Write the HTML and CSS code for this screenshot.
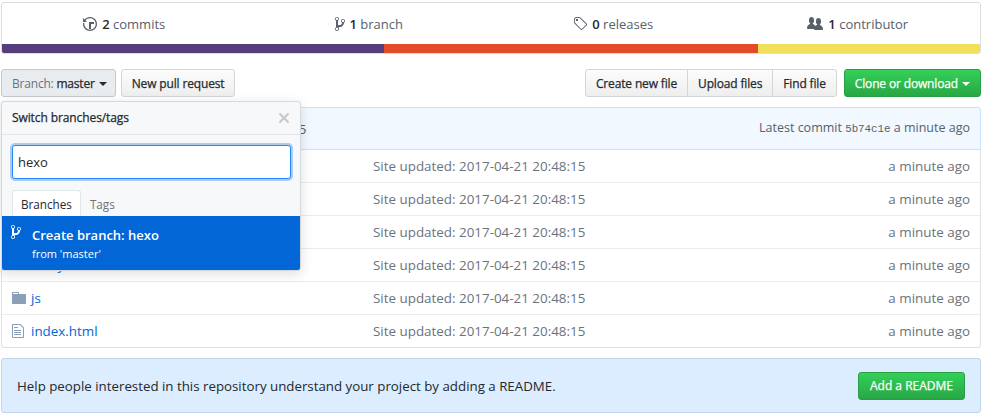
FILE: index.html
```html
<!DOCTYPE html>
<html lang="en">
<head>
    <meta charset="UTF-8">
    <meta name="viewport" content="width=device-width, initial-scale=1.0">
    <title>Repository</title>
    <link rel="stylesheet" href="styles.css">
</head>
<body>
    <svg class="sprites" width="0" height="0">
        <symbol id="i-history" viewBox="0 0 14 16"><path d="M8 13H6V6h5v2H8v5zM7 1C4.81 1 2.87 2.02 1.59 3.59L0 2v4h4L2.5 4.5C3.55 3.17 5.17 2.3 7 2.3c3.14 0 5.7 2.56 5.7 5.7s-2.56 5.7-5.7 5.7A5.71 5.71 0 0 1 1.3 8c0-.34.03-.67.09-1H.08C.03 7.33 0 7.66 0 8c0 3.86 3.14 7 7 7s7-3.14 7-7-3.14-7-7-7z"/></symbol>
        <symbol id="i-branch" viewBox="0 0 10 16"><path d="M10 5c0-1.11-.89-2-2-2a1.993 1.993 0 0 0-1 3.72v.3c-.02.52-.23.98-.63 1.38-.4.4-.86.61-1.38.63-.83.02-1.48.16-2 .45V4.72a1.993 1.993 0 0 0-1-3.72C.88 1 0 1.89 0 3a2 2 0 0 0 1 1.72v6.56c-.59.35-1 .99-1 1.72 0 1.11.89 2 2 2 1.11 0 2-.89 2-2 0-.53-.2-1-.53-1.36.09-.06.48-.41.59-.47.25-.11.56-.17.94-.17 1.05-.05 1.95-.45 2.75-1.25S8.95 7.77 9 6.73h-.02C9.59 6.37 10 5.73 10 5zM2 1.8c.66 0 1.2.55 1.2 1.2 0 .65-.55 1.2-1.2 1.2C1.35 4.2.8 3.65.8 3c0-.65.55-1.2 1.2-1.2zm0 12.41c-.66 0-1.2-.55-1.2-1.2 0-.65.55-1.2 1.2-1.2.65 0 1.2.55 1.2 1.2 0 .65-.55 1.2-1.2 1.2zm6-8c-.66 0-1.2-.55-1.2-1.2 0-.65.55-1.2 1.2-1.2.65 0 1.2.55 1.2 1.2 0 .65-.55 1.2-1.2 1.2z"/></symbol>
        <symbol id="i-tag" viewBox="0 0 14 16"><path d="M7.73 1.73C7.26 1.26 6.62 1 5.96 1H3.5C2.13 1 1 2.13 1 3.5v2.47c0 .66.27 1.3.73 1.77l6.06 6.06c.39.39 1.02.39 1.41 0l4.59-4.59a.996.996 0 0 0 0-1.41L7.73 1.73zM2.38 7.09c-.31-.3-.47-.7-.47-1.13V3.5c0-.88.72-1.59 1.59-1.59h2.47c.42 0 .83.16 1.13.47l6.14 6.13-4.73 4.73-6.13-6.15zM3.01 3h2v2H3V3h.01z"/></symbol>
        <symbol id="i-people" viewBox="0 0 16 16"><path d="M16 12.999c0 .439-.45 1-1 1H7.995c-.539 0-.994-.447-.995-.999H1c-.54 0-1-.561-1-1 0-2.634 3-4 3-4s.229-.409 0-1c-.841-.621-1.058-.59-1-3 .058-2.419 1.367-3 2.5-3s2.442.58 2.5 3c.058 2.41-.159 2.379-1 3-.229.59 0 1 0 1s1.549.711 2.42 2.088C9.196 9.369 10 8.999 10 8.999s.229-.409 0-1c-.841-.62-1.058-.59-1-3 .058-2.419 1.367-3 2.5-3s2.437.581 2.495 3c.059 2.41-.158 2.38-1 3-.229.59 0 1 0 1s3.005 1.366 3.005 4z"/></symbol>
        <symbol id="i-folder" viewBox="0 0 14 16"><path d="M13 4H7V3c0-.66-.31-1-1-1H1c-.55 0-1 .45-1 1v10c0 .55.45 1 1 1h12c.55 0 1-.45 1-1V5c0-.55-.45-1-1-1zM6 4H1V3h5v1z"/></symbol>
        <symbol id="i-file" viewBox="0 0 12 16"><path d="M6 5H2V4h4v1zM2 8h7V7H2v1zm0 2h7V9H2v1zm0 2h7v-1H2v1zm10-7.5V14c0 .55-.45 1-1 1H1c-.55 0-1-.45-1-1V2c0-.55.45-1 1-1h7.5L12 4.5zM11 5L8 2H1v12h10V5z"/></symbol>
        <symbol id="i-x" viewBox="0 0 12 16"><path d="M7.48 8l3.75 3.75-1.48 1.48L6 9.48l-3.75 3.75-1.48-1.48L4.52 8 .77 4.25l1.48-1.48L6 6.52l3.75-3.75 1.48 1.48L7.48 8z"/></symbol>
    </svg>

    <div class="container">
        <div class="overall">
            <ul class="numbers">
                <li><svg class="icon" width="14" height="16"><use href="#i-history"/></svg><span><b>2</b> commits</span></li>
                <li><svg class="icon" width="10" height="16"><use href="#i-branch"/></svg><span><b>1</b> branch</span></li>
                <li><svg class="icon" width="14" height="16"><use href="#i-tag"/></svg><span><b>0</b> releases</span></li>
                <li><svg class="icon" width="16" height="16"><use href="#i-people"/></svg><span><b>1</b> contributor</span></li>
            </ul>
            <div class="langs">
                <span class="lang-css"></span>
                <span class="lang-html"></span>
                <span class="lang-js"></span>
            </div>
        </div>

        <div class="actions">
            <div class="branch-wrap">
                <button class="btn btn-selected"><span class="muted">Branch:</span> master<i class="caret"></i></button>
                <div class="menu">
                    <div class="menu-head">
                        <span>Switch branches/tags</span>
                        <svg class="menu-close" width="12" height="16"><use href="#i-x"/></svg>
                    </div>
                    <div class="menu-filter"><input class="filter-input" type="text" value="hexo"></div>
                    <div class="menu-tabs">
                        <span class="tab tab-active">Branches</span>
                        <span class="tab">Tags</span>
                    </div>
                    <div class="menu-create">
                        <svg class="create-icon" width="10" height="16"><use href="#i-branch"/></svg>
                        <div>
                            <div class="create-title">Create branch: hexo</div>
                            <div class="create-from">from 'master'</div>
                        </div>
                    </div>
                </div>
            </div>
            <button class="btn">New pull request</button>
            <div class="spacer"></div>
            <div class="btn-group">
                <button class="btn">Create new file</button>
                <button class="btn">Upload files</button>
                <button class="btn">Find file</button>
            </div>
            <button class="btn btn-green">Clone or download<i class="caret"></i></button>
        </div>

        <div class="tease">
            <span class="tease-msg">Site updated: 2017-04-21 20:48:15</span>
            <span class="tease-meta">Latest commit <code>5b74c1e</code> a minute ago</span>
        </div>
        <div class="files">
            <div class="row"><span class="name"><svg class="file-icon" width="14" height="16"><use href="#i-folder"/></svg><a>2017</a></span><span class="msg">Site updated: 2017-04-21 20:48:15</span><span class="age">a minute ago</span></div>
            <div class="row"><span class="name"><svg class="file-icon" width="14" height="16"><use href="#i-folder"/></svg><a>archives</a></span><span class="msg">Site updated: 2017-04-21 20:48:15</span><span class="age">a minute ago</span></div>
            <div class="row"><span class="name"><svg class="file-icon" width="14" height="16"><use href="#i-folder"/></svg><a>css</a></span><span class="msg">Site updated: 2017-04-21 20:48:15</span><span class="age">a minute ago</span></div>
            <div class="row"><span class="name"><svg class="file-icon" width="14" height="16"><use href="#i-folder"/></svg><a>fancybox</a></span><span class="msg">Site updated: 2017-04-21 20:48:15</span><span class="age">a minute ago</span></div>
            <div class="row"><span class="name"><svg class="file-icon" width="14" height="16"><use href="#i-folder"/></svg><a>js</a></span><span class="msg">Site updated: 2017-04-21 20:48:15</span><span class="age">a minute ago</span></div>
            <div class="row"><span class="name"><svg class="file-icon file-icon-text" width="12" height="16"><use href="#i-file"/></svg><a>index.html</a></span><span class="msg">Site updated: 2017-04-21 20:48:15</span><span class="age">a minute ago</span></div>
        </div>

        <div class="readme">
            <span>Help people interested in this repository understand your project by adding a README.</span>
            <button class="btn btn-green btn-readme">Add a README</button>
        </div>
    </div>
</body>
</html>
```
FILE: styles.css
```css
* {
    box-sizing: border-box;
}
body {
    margin: 0;
    font-family: "Open Sans", sans-serif;
    font-size: 14px;
    line-height: 20px;
    color: #24292e;
    background: #fff;
    overflow: hidden;
}
.sprites {
    position: absolute;
}
.container {
    width: 980px;
    margin: 2px 0 0 1px;
}
.overall {
    border: 1px solid #ddd;
    border-radius: 3px;
    overflow: hidden;
}
.numbers {
    display: flex;
    margin: 0;
    padding: 0;
    list-style: none;
    height: 41px;
}
.numbers li {
    flex: 1;
    display: flex;
    align-items: center;
    justify-content: center;
    gap: 5px;
    color: #586069;
    font-size: 13px;
}
.numbers b {
    font-weight: 600;
    color: #24292e;
}
.icon {
    fill: #586069;
}
.langs {
    display: flex;
    height: 9px;
}
.lang-css {
    width: 382px;
    background: #563d7c;
}
.lang-html {
    width: 374px;
    background: #e34c26;
}
.lang-js {
    flex: 1;
    background: #f1e05a;
}

.actions {
    display: flex;
    align-items: flex-start;
    gap: 5px;
    margin-top: 15px;
}
.spacer {
    flex: 1;
}
.btn {
    height: 28px;
    padding: 0 10px;
    border: 1px solid #d5d5d5;
    border-radius: 3px;
    background: linear-gradient(#fcfcfc, #eee);
    font-family: inherit;
    font-size: 12px;
    letter-spacing: -0.15px;
    -webkit-text-stroke: 0.25px;
    color: #24292e;
    white-space: nowrap;
}
.btn-selected {
    padding-right: 8px;
    letter-spacing: -0.2px;
    background: #e9ecef;
    border-color: #c4c8cc;
}
.muted {
    -webkit-text-stroke: 0;
    color: #6a737d;
}
.caret {
    display: inline-block;
    margin-left: 4px;
    vertical-align: middle;
    border: 4px solid transparent;
    border-top-color: currentColor;
    border-bottom: 0;
}
.btn-group {
    display: flex;
    margin-right: 2px;
}
.btn-group .btn {
    border-radius: 0;
    margin-left: -1px;
}
.btn-group .btn:first-child {
    border-radius: 3px 0 0 3px;
}
.btn-group .btn:last-child {
    border-radius: 0 3px 3px 0;
}
.btn-green {
    color: #fff;
    background: linear-gradient(#34d058, #28a745);
    border-color: #279f43;
    letter-spacing: -0.15px;
}

.branch-wrap {
    position: relative;
}
.menu {
    position: absolute;
    top: 32px;
    left: 0;
    z-index: 10;
    width: 300px;
    height: 170px;
    border: 1px solid #d5d8dc;
    border-radius: 3px;
    background: #f6f8fa;
    box-shadow: 0 3px 12px rgba(27, 31, 35, 0.15);
    overflow: hidden;
}
.menu-head {
    display: flex;
    align-items: center;
    justify-content: space-between;
    height: 33px;
    padding: 0 10px;
    border-bottom: 1px solid #e1e4e8;
    font-size: 12px;
    letter-spacing: -0.1px;
    -webkit-text-stroke: 0.25px;
}
.menu-close {
    fill: #c5c8cc;
}
.menu-filter {
    padding: 10px 9px 0 10px;
}
.filter-input {
    display: block;
    width: 100%;
    height: 34px;
    padding: 0 8px 0 5px;
    border: 1px solid #2188ff;
    border-radius: 3px;
    box-shadow: 0 0 0 2px rgba(3, 102, 214, 0.3);
    outline: none;
    font-family: inherit;
    font-size: 13px;
    color: #24292e;
}
.menu-tabs {
    display: flex;
    height: 26px;
    margin-top: 11px;
    padding-left: 10px;
    font-size: 11.7px;
}
.tab {
    padding: 3px 8px;
    border: 1px solid transparent;
    border-bottom: 0;
    color: #6a737d;
}
.tab-active {
    background: #fff;
    border-color: #e1e4e8;
    border-radius: 3px 3px 0 0;
    color: #24292e;
}
.menu-create {
    display: flex;
    gap: 11px;
    height: 55px;
    margin: 0 -1px;
    padding: 8px 10px 0 10px;
    background: #0366d6;
    color: #fff;
}
.create-icon {
    fill: #fff;
}
.create-title {
    margin-top: 1px;
    font-size: 13px;
    font-weight: 600;
}
.create-from {
    font-size: 11px;
    line-height: 18px;
}

.tease {
    display: flex;
    align-items: center;
    justify-content: space-between;
    height: 43px;
    margin-top: 10px;
    padding: 0 10px 0 92px;
    border: 1px solid #c8e1ff;
    border-radius: 3px 3px 0 0;
    background: #f1f8ff;
    font-size: 12.5px;
    color: #586069;
}
.tease-msg {
    font-size: 13.4px;
}
.tease-meta code {
    font-family: "Liberation Mono", monospace;
    font-size: 10.8px;
}
.files {
    border: 1px solid #dfe2e5;
    border-top: 0;
    border-radius: 0 0 3px 3px;
}
.row {
    display: flex;
    align-items: center;
    height: 33px;
    padding: 0 10px;
    border-top: 1px solid #eaecef;
    font-size: 13.4px;
}
.row:first-child {
    border-top: 0;
    height: 32px;
}
.name {
    display: flex;
    align-items: center;
    width: 361px;
}
.name a {
    color: #0366d6;
}
.file-icon {
    fill: #8b9fb8;
    margin-right: 5px;
}
.file-icon-text {
    margin-right: 7px;
}
.msg {
    flex: 1;
    color: #6a737d;
}
.age {
    color: #6a737d;
}

.readme {
    display: flex;
    align-items: center;
    justify-content: space-between;
    height: 55px;
    margin-top: 10px;
    padding: 0 15px;
    border: 1px solid #c0d3eb;
    border-radius: 3px;
    background: #dbedff;
    font-size: 13.3px;
}
.btn-readme {
    padding: 0 11px;
    letter-spacing: 0;
}
```
